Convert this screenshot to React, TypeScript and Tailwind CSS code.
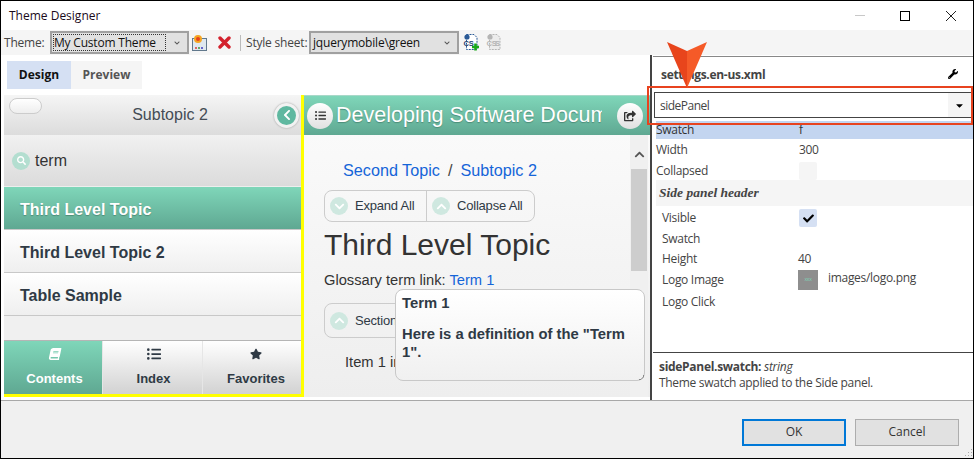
import { FaBook, FaCheck, FaChevronDown, FaChevronLeft, FaChevronUp, FaCaretDown, FaListUl, FaSearch, FaShareSquare, FaStar, FaWrench } from "react-icons/fa";
import { ReactNode } from "react";

const UI_FONT = "font-['Open_Sans','Noto_Sans',sans-serif]";
const WEB_FONT = "font-['Liberation_Sans',Arial,sans-serif]";
const GREEN = "bg-gradient-to-b from-[#7fd6b9] to-[#5fa892]";

function Select({ label, width, focused }: { label: string; width: string; focused?: boolean }) {
  return (
    <div className={`h-[23px] ${width} flex items-center border-2 border-[#a0a0a0] bg-[#e1e1e1] text-[12px] text-[#111] tracking-[-0.2px]`}>
      <div className={`m-px flex-1 h-[17px] leading-[16px] border border-dotted self-center ${focused ? "border-[#333]" : "border-transparent"}`}>{label}</div>
      <FaChevronDown className="w-[10px] h-[6px] mx-[5px] text-[#555]" />
    </div>
  );
}

function ThemeIcon() {
  return (
    <svg width="16" height="18" viewBox="0 0 16 18" className="ml-[3px]">
      <rect x="0.5" y="4.5" width="14" height="12" fill="#dfe8ef" stroke="#61788c" />
      <circle cx="6" cy="5" r="4" fill="#f5a623" />
      <circle cx="6" cy="5" r="2" fill="#e8431f" />
      <rect x="3" y="13" width="2" height="2" fill="#d66" />
      <rect x="6" y="13" width="2" height="2" fill="#6a6" />
      <rect x="9" y="13" width="2" height="2" fill="#66c" />
    </svg>
  );
}

function DeleteIcon() {
  return (
    <svg width="13" height="13" viewBox="0 0 13 13" className="ml-[10px]">
      <path d="M2 2 L11 11 M11 2 L2 11" stroke="#d3212d" strokeWidth="3.4" strokeLinecap="round" />
    </svg>
  );
}

function CssIcon({ disabled }: { disabled?: boolean }) {
  const ink = disabled ? "#b5b5b5" : "#2a5a96";
  return (
    <svg width="17" height="17" viewBox="0 0 17 17" className={disabled ? "ml-[6px]" : "ml-[4px]"}>
      <path d="M3.5 0.5 H11 L14 3.5 V15.5 H3.5 Z" fill={disabled ? "#ececec" : "#fff"} stroke={ink} strokeDasharray="2 1" />
      <circle cx="4" cy="3" r="2.6" fill={ink} />
      <text x="0.5" y="12" fontSize="7.5" fontWeight="700" fontFamily="Liberation Sans" fill={disabled ? ink : "#1c3f70"}>CS</text>
      {!disabled && <path d="M12.5 9.5 V16.5 M9 13 H16" stroke="#18a818" strokeWidth="2.6" />}
      {disabled && <text x="9" y="12" fontSize="7.5" fontWeight="700" fontFamily="Liberation Sans" fill={ink}>S</text>}
    </svg>
  );
}

function CircleIcon({ children, className }: { children: ReactNode; className: string }) {
  return <span className={`flex items-center justify-center rounded-full ${className}`}>{children}</span>;
}

function ListRow({ label, selected }: { label: string; selected?: boolean }) {
  return (
    <div
      className={`h-[43px] flex items-center pl-[16px] pt-[3px] text-[16px] font-bold border-b ${
        selected
          ? `${GREEN} text-white border-[#c8c8c8] [text-shadow:0_1px_1px_#4d8c78]`
          : "bg-gradient-to-b from-white to-[#efefef] text-[#2f3a45] border-[#c8c8c8]"
      }`}
    >
      {label}
    </div>
  );
}

function NavTab({ label, icon, active, className }: { label: string; icon: ReactNode; active?: boolean; className: string }) {
  return (
    <div
      className={`flex flex-col items-center border-r border-[#e6e6e6] last:border-r-0 pt-[7px] text-[13px] font-bold ${className} ${
        active ? `${GREEN} text-white` : "bg-gradient-to-b from-white to-[#d2d2d2] text-[#2f3a45]"
      }`}
    >
      <span className="h-[12px] flex items-center">{icon}</span>
      <span className="mt-[11px] leading-[16px]">{label}</span>
    </div>
  );
}

function PropRow({ label, value, height = "h-[20.5px]", labelWidth = "w-[143px]", className }: { label: string; value?: ReactNode; height?: string; labelWidth?: string; className?: string }) {
  return (
    <div className={`${height} flex items-center shrink-0 ${className ?? ""}`}>
      <span className={`${labelWidth} shrink-0`}>{label}</span>
      {value}
    </div>
  );
}

function CheckBox({ checked }: { checked?: boolean }) {
  return (
    <span className={`w-[18px] h-[18px] rounded-[2px] flex items-center justify-center ${checked ? "bg-[#d5e0f3]" : "bg-[#f5f5f5]"}`}>
      {checked && <FaCheck className="w-[11px] h-[11px] text-black" />}
    </span>
  );
}

function LeftPanel() {
  return (
    <div className="w-[300px] shrink-0 flex flex-col border-r-[3px] border-b-[3px] border-[#ffff00] bg-[#f0f0f0]">
      <div className="h-[40px] flex items-center bg-gradient-to-b from-[#f5f5f5] to-[#dcdcdc] relative">
        <div className="absolute left-[5px] top-[3px] w-[33px] h-[16px] rounded-full bg-gradient-to-b from-white to-[#eee] border border-[#ccc]" />
        <div className="flex-1 text-center text-[16px] text-[#444c55] pl-[62px] pb-[1px]">Subtopic 2</div>
        <CircleIcon className="w-[25px] h-[25px] mr-[2px] bg-[#5fb8a0] border-[3px] border-[#f2f2f2] shadow-[0_0_2px_#999]">
          <FaChevronLeft className="w-[12px] h-[12px] text-white" />
        </CircleIcon>
      </div>
      <div className="h-[52px] flex items-center pl-[8px] bg-gradient-to-b from-[#f1f1f1] to-[#dbdbdb] border-b border-[#eee] text-[16px] text-[#333]">
        <CircleIcon className="w-[18px] h-[18px] bg-[#b3ded0]">
          <FaSearch className="w-[9px] h-[9px] text-white" />
        </CircleIcon>
        <span className="ml-[5px]">term</span>
      </div>
      <ListRow label="Third Level Topic" selected />
      <ListRow label="Third Level Topic 2" />
      <ListRow label="Table Sample" />
      <div className="flex-1" />
      <div className="h-[54px] flex border-t border-[#b5b5b5]">
        <NavTab active className="w-[99px] pl-[3px]" label="Contents" icon={<FaBook className="w-[12px] h-[12px] -skew-x-12" />} />
        <NavTab className="w-[100px] pl-[2px]" label="Index" icon={<FaListUl className="w-[14px] h-[14px]" />} />
        <NavTab className="w-[98px] pl-[8px]" label="Favorites" icon={<FaStar className="w-[12px] h-[12px]" />} />
      </div>
    </div>
  );
}

function ContentPanel() {
  return (
    <div className="flex-1 flex flex-col min-w-0 relative">
      <div className={`h-[40px] flex items-center ${GREEN} border-t border-[#a8d8c8]`}>
        <CircleIcon className="w-[26px] h-[26px] ml-[3px] shrink-0 bg-gradient-to-b from-white to-[#e0e0e0] text-[#333]">
          <FaListUl className="w-[11px] h-[11px]" />
        </CircleIcon>
        <div className="w-[266px] ml-[3px] overflow-hidden whitespace-nowrap text-[21.5px] text-white [text-shadow:0_1px_1px_#4d8c78]">
          Developing Software Documentation
        </div>
        <CircleIcon className="w-[26px] h-[26px] ml-[15px] shrink-0 rounded-[9px] bg-gradient-to-b from-white to-[#e0e0e0] text-[#333]">
          <FaShareSquare className="w-[12px] h-[12px]" />
        </CircleIcon>
        <div className="flex-1" />
      </div>
      <div className="flex-1 flex min-h-0 bg-gradient-to-b from-[#fafafa] to-[#eeeeee]">
        <div className="flex-1 pl-[20px] pt-[25px] text-[#333]">
          <div className="pl-[19px] text-[16.2px] leading-[20px] text-[#1565d8]">
            Second Topic<span className="text-[#444] mx-[8px]">/</span>Subtopic 2
          </div>
          <div className="mt-[10px] w-[211px] h-[32px] flex items-center rounded-[8px] border border-[#ccc] text-[13px] tracking-[-0.2px] text-[#2f3a45]">
            <div className="w-[102px] h-full flex items-center pl-[5px] border-r border-[#ccc]">
              <CircleIcon className="w-[18px] h-[18px] bg-[#cfe8e0]"><FaChevronDown className="w-[11px] h-[11px] text-white" /></CircleIcon>
              <span className="ml-[7px]">Expand All</span>
            </div>
            <div className="flex-1 h-full flex items-center pl-[5px]">
              <CircleIcon className="w-[18px] h-[18px] bg-[#cfe8e0]"><FaChevronUp className="w-[11px] h-[11px] text-white" /></CircleIcon>
              <span className="ml-[7px]">Collapse All</span>
            </div>
          </div>
          <h1 className="mt-[6px] text-[30px] leading-[34px] text-[#333]">Third Level Topic</h1>
          <div className="mt-[9px] text-[14.7px] leading-[18px]">
            Glossary term link: <span className="text-[#1565d8]">Term 1</span>
          </div>
          <div className="mt-[14px] w-[200px] h-[35px] flex items-center pl-[5px] rounded-[8px] border border-[#ccc] text-[13px] tracking-[-0.2px] text-[#2f3a45]">
            <CircleIcon className="w-[18px] h-[18px] bg-[#cfe8e0]"><FaChevronUp className="w-[11px] h-[11px] text-white" /></CircleIcon>
            <span className="ml-[7px]">Section 1</span>
          </div>
          <div className="mt-[15px] pl-[21px] text-[14.7px] leading-[18px]">Item 1 in the section</div>
        </div>
        <div className="w-[18px] shrink-0 mr-[2px] bg-[#f0f0f0] flex flex-col items-center">
          <div className="h-[34px] flex items-end justify-center pb-[9px]">
            <FaChevronUp className="w-[13px] h-[11px] text-[#555]" />
          </div>
          <div className="w-[16px] h-[102px] bg-[#cdcdcd]" />
        </div>
      </div>
      <div className="absolute left-[91px] top-[194px] w-[250px] h-[92px] rounded-[8px] border border-[#c8c8c8] bg-gradient-to-b from-white to-[#f0f0f0] px-[6px] pt-[4px] text-[14.8px] font-bold leading-[18px] text-[#2f3a45]">
        <div>Term 1</div>
        <div className="mt-[13px]">Here is a definition of the "Term 1".</div>
        <svg width="6" height="6" viewBox="0 0 6 6" className="absolute right-0 bottom-0">
          <path d="M5.5 1 V3 L3 5.5 H1" fill="none" stroke="#888" />
        </svg>
      </div>
    </div>
  );
}

function RightPanel() {
  return (
    <div className={`flex-1 min-w-0 flex flex-col border-l-2 border-[#444] pl-px ${UI_FONT} text-[12px] text-[#444] tracking-[-0.3px]`}>
      <div className="h-[32px] mt-px border-t border-[#888] flex items-end justify-between pl-[8px] pr-[15px] pb-[1px] shrink-0">
        <span className="text-[12px] font-bold leading-[24px] text-[#444]">settings.en-us.xml</span>
        <FaWrench className="w-[10px] h-[10px] text-black mb-[8px]" />
      </div>
      <div className="mx-px mt-[4px] h-[26px] shrink-0 border border-[#444] flex items-center justify-between bg-white">
        <span className="pl-[5px] pt-px tracking-[-0.5px]">sidePanel</span>
        <span className="w-[23px] h-full bg-[#f5f5f5] flex items-center justify-center">
          <FaCaretDown className="w-[11px] h-[11px] text-black" />
        </span>
      </div>
      <div className="ml-[3px] mt-[3px] flex flex-col flex-1 min-h-0">
        <PropRow label="Swatch" value={<span>f</span>} height="h-[18px]" className="bg-[#c3d5f0] text-[#333]" />
        <PropRow label="Width" value={<span>300</span>} className="mt-[1px]" />
        <PropRow label="Collapsed" value={<CheckBox />} />
        <div className="h-[26px] shrink-0 flex items-center pl-[3px] bg-[#f5f5f5] mt-[-1px] font-['Liberation_Serif',serif] text-[13.5px] font-bold italic tracking-normal text-[#444]">
          Side panel header
        </div>
        <div className="pl-[6px] flex flex-col text-[12px]">
          <PropRow label="Visible" labelWidth="w-[137px]" value={<CheckBox checked />} className="mt-[2px]" />
          <PropRow label="Swatch" labelWidth="w-[137px]" />
          <PropRow label="Height" labelWidth="w-[137px]" value={<span className="-ml-px">40</span>} />
          <PropRow
            label="Logo Image"
            labelWidth="w-[137px]"
            height="h-[21px]"
            value={
              <>
                <span className="w-[20px] h-[20px] -ml-px bg-[#8e8e8e] flex items-center justify-center text-[5px] text-[#7fd6b9]">xxx</span>
                <span className="ml-[10px] -mt-[4px]">images/logo.png</span>
              </>
            }
          />
          <PropRow label="Logo Click" labelWidth="w-[137px]" height="h-[21px]" className="pt-px" />
        </div>
      </div>
      <div className="h-[48px] shrink-0 border-t border-[#444] pl-[6px] pt-[6px] leading-[16px] text-[12px]">
        <div><span className="font-bold">sidePanel.swatch:</span> <span className="italic">string</span></div>
        <div>Theme swatch applied to the Side panel.</div>
      </div>
    </div>
  );
}

export default function App() {
  return (
    <div className="w-[974px] h-[459px] relative flex flex-col border border-black bg-white overflow-hidden">
      <div className={`h-[29px] shrink-0 flex items-center pl-[8px] ${UI_FONT} text-[12px] text-[#1a0a1a]`}>
        <span className="flex-1">Theme Designer</span>
        <div className="w-[10px] h-px bg-[#c8c8c8] mr-[35px]" />
        <div className="w-[10px] h-[10px] border border-black mr-[36px]" />
        <svg width="10" height="10" viewBox="0 0 10 10" className="mr-[17px]">
          <path d="M0 0 L10 10 M10 0 L0 10" stroke="#222" strokeWidth="1" />
        </svg>
      </div>

      <div className={`h-[25px] shrink-0 flex items-center pl-[3px] bg-[#f5f5f5] ${UI_FONT} text-[12px] text-[#444] tracking-[-0.2px]`}>
        <span className="w-[46px]">Theme:</span>
        <Select focused label="My Custom Theme" width="w-[139px]" />
        <ThemeIcon />
        <DeleteIcon />
        <div className="w-px h-[16px] bg-[#bbb] ml-[9px] mr-[5px]" />
        <span className="w-[63px]">Style sheet:</span>
        <Select label="jquerymobile\green" width="w-[150px]" />
        <CssIcon />
        <CssIcon disabled />
      </div>

      <div className="flex-1 flex min-h-0">
        <div className="w-[649px] shrink-0 flex flex-col">
          <div className={`h-[40px] shrink-0 pt-[6px] pl-[6px] flex items-start ${UI_FONT} text-[12px] font-bold`}>
            <div className="w-[64px] h-[28px] flex items-center justify-center bg-[#d5e0f3] text-[#111]">Design</div>
            <div className="w-[71px] h-[28px] flex items-center justify-center bg-[#f5f5f5] text-[#555]">Preview</div>
          </div>
          <div className={`flex-1 flex min-h-0 pl-[3px] pb-[3px] ${WEB_FONT}`}>
            <LeftPanel />
            <ContentPanel />
          </div>
        </div>
        <RightPanel />
      </div>

      <div className={`h-[58px] shrink-0 bg-[#f0f0f0] border-t border-[#a8a8a8] flex items-center justify-end pr-[14px] pt-[5px] gap-[9px] relative ${UI_FONT} text-[12px] text-[#333]`}>
        <button className="w-[104px] h-[27px] border-2 border-[#0078d7] bg-[#e1e1e1]">OK</button>
        <button className="w-[104px] h-[27px] border border-[#adadad] bg-[#e1e1e1]">Cancel</button>
        <svg width="10" height="10" viewBox="0 0 10 10" className="absolute right-0 bottom-0">
          <path d="M8 1h1v1H8zM8 4h1v1H8zM5 4h1v1H5zM8 7h1v1H8zM5 7h1v1H5zM2 7h1v1H2z" fill="#aaa" />
        </svg>
      </div>

      {/* red callout over the dropdown */}
      <div className="absolute left-[646px] top-[85px] w-[326px] h-[39px] border-2 border-[#e8431f] pointer-events-none" />
      <svg width="42" height="50" viewBox="0 0 42 50" className="absolute left-[665px] top-[39px] pointer-events-none">
        <path d="M1 2 L21 11 V48 Z" fill="#e8451c" />
        <path d="M41 2 L21 11 V48 Z" fill="#f55a28" />
      </svg>
    </div>
  );
}
